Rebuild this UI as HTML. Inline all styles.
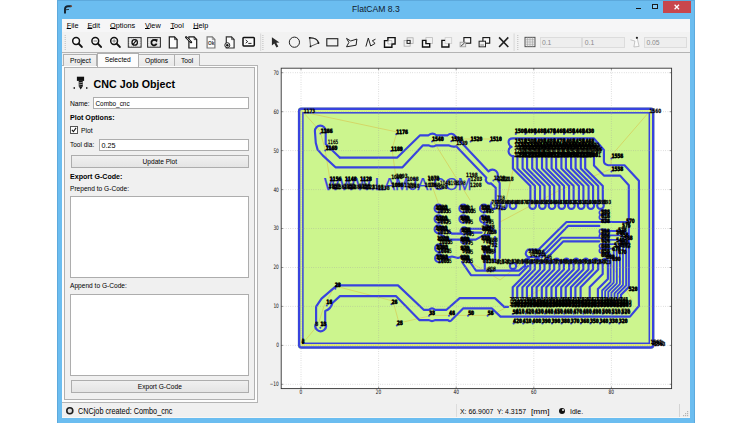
<!DOCTYPE html>
<html><head><meta charset="utf-8"><title>FlatCAM 8.3</title>
<style>
html,body{margin:0;padding:0;background:#fff;}
body{width:752px;height:423px;position:relative;overflow:hidden;font-family:"Liberation Sans",sans-serif;font-size:7.2px;color:#000;}
.a{position:absolute;}
.t{position:absolute;white-space:nowrap;line-height:10px;}
#win{left:57px;top:0;width:638px;height:423px;background:#6bbdf0;box-sizing:border-box;border-top:1px solid #5da9dc;border-left:0.6px solid #5da9dc;border-right:0.6px solid #5da9dc;}
#content{left:62px;top:19px;width:628px;height:399px;background:#f0f0f0;}
#menubar{left:62px;top:19px;width:628px;height:13px;background:#f6f6f7;}
#toolbar{left:62px;top:32px;width:628px;height:20px;background:#f2f2f2;border-bottom:1px solid #b4b4b4;}
.menu{top:20.7px;font-size:7.3px;line-height:10px;}
.menu u{text-decoration-thickness:0.6px;text-underline-offset:0.3px;}
.inp{background:#eeeeee;border:1px solid #dcdcdc;box-sizing:border-box;color:#8a8a8a;font-size:6.8px;line-height:9.9px;padding-left:1.4px;height:11.5px;top:36.5px;}
.tab{box-sizing:border-box;border:1px solid #b0b0b0;border-bottom:none;background:linear-gradient(#f3f3f3,#e8e8e8);text-align:center;font-size:6.7px;line-height:9px;color:#000;}
.field{background:#fff;border:1px solid #adadad;box-sizing:border-box;font-size:6.9px;}
.btn{background:linear-gradient(#f0f0f0,#e4e4e4);border:1px solid #adadad;box-sizing:border-box;text-align:center;font-size:6.6px;}
</style></head><body>
<div id="win" class="a"></div>
<div id="content" class="a"></div>
<div id="menubar" class="a"></div>
<div id="toolbar" class="a"></div>
<svg class="a" style="left:63px;top:4px" width="10" height="10" viewBox="0 0 10 10"><path d="M2 9.4 L2 5 Q2 2.2 5 2.2 L8.2 2.2" fill="none" stroke="#14222e" stroke-width="1.9"/><path d="M2.6 5.8 L6 5.4" fill="none" stroke="#2a3a48" stroke-width="1"/><circle cx="8.2" cy="2.2" r="0.9" fill="#7a4a38"/></svg>
<div class="t" style="left:352px;top:4px;font-size:8.6px;line-height:11px;color:#10202c;">FlatCAM 8.3</div>
<div class="a" style="left:636px;top:8.1px;width:5.4px;height:1.3px;background:#161616;"></div>
<div class="a" style="left:651.6px;top:4.2px;width:6.6px;height:5.2px;box-sizing:border-box;border:0.8px solid #1a1a1a;border-top-width:1.6px;background:#86caf4;"></div>
<div class="a" style="left:663px;top:1px;width:27.7px;height:11.8px;background:#c8474d;"></div>
<svg class="a" style="left:663px;top:1px" width="27.7" height="11.8"><path d="M11.6 3.8 L16 8.2 M16 3.8 L11.6 8.2" stroke="#fff" stroke-width="1.25"/></svg>
<div class="t menu" style="left:66.7px;"><u>F</u>ile</div>
<div class="t menu" style="left:87.4px;"><u>E</u>dit</div>
<div class="t menu" style="left:110.0px;"><u>O</u>ptions</div>
<div class="t menu" style="left:145.0px;"><u>V</u>iew</div>
<div class="t menu" style="left:170.4px;"><u>T</u>ool</div>
<div class="t menu" style="left:193.2px;"><u>H</u>elp</div>
<svg class="a" style="left:62.5px;top:32px" width="627.5" height="20" viewBox="62.5 32 627.5 20">
<line x1="64.7" y1="35" x2="64.7" y2="50" stroke="#bdbdbd" stroke-width="1" stroke-dasharray="1 1"/>
<line x1="262.4" y1="35" x2="262.4" y2="50" stroke="#bdbdbd" stroke-width="1" stroke-dasharray="1 1"/>
<line x1="517.3" y1="35" x2="517.3" y2="50" stroke="#bdbdbd" stroke-width="1" stroke-dasharray="1 1"/>
<line x1="260.2" y1="33.5" x2="260.2" y2="51" stroke="#d0d0d0" stroke-width="0.8"/>
<line x1="513.6" y1="33.5" x2="513.6" y2="51" stroke="#d0d0d0" stroke-width="0.8"/>
<circle cx="75.6" cy="41" r="3.4" fill="#fafafa" stroke="#111" stroke-width="1.5"/><line x1="78.19999999999999" y1="43.6" x2="81.3" y2="46.9" stroke="#111" stroke-width="2" stroke-linecap="round"/>
<circle cx="94.8" cy="41" r="3.4" fill="#fafafa" stroke="#111" stroke-width="1.5"/><line x1="97.39999999999999" y1="43.6" x2="100.5" y2="46.9" stroke="#111" stroke-width="2" stroke-linecap="round"/><line x1="93.0" y1="41" x2="96.6" y2="41" stroke="#666" stroke-width="0.8"/>
<circle cx="113.6" cy="41" r="3.4" fill="#fafafa" stroke="#111" stroke-width="1.5"/><line x1="116.19999999999999" y1="43.6" x2="119.3" y2="46.9" stroke="#111" stroke-width="2" stroke-linecap="round"/><line x1="111.8" y1="41" x2="115.39999999999999" y2="41" stroke="#666" stroke-width="0.8"/><line x1="113.6" y1="39.2" x2="113.6" y2="42.8" stroke="#666" stroke-width="0.8"/>
<rect x="127.8" y="37.6" width="12.8" height="9.6" fill="#d9d9d9" stroke="#2a2a2a" stroke-width="1"/><line x1="129.93" y1="38.1" x2="129.93" y2="46.7" stroke="#f4f4f4" stroke-width="0.6"/><line x1="132.06" y1="38.1" x2="132.06" y2="46.7" stroke="#f4f4f4" stroke-width="0.6"/><line x1="134.19" y1="38.1" x2="134.19" y2="46.7" stroke="#f4f4f4" stroke-width="0.6"/><line x1="136.32" y1="38.1" x2="136.32" y2="46.7" stroke="#f4f4f4" stroke-width="0.6"/><line x1="138.45" y1="38.1" x2="138.45" y2="46.7" stroke="#f4f4f4" stroke-width="0.6"/><line x1="128.3" y1="40.00" x2="140.1" y2="40.00" stroke="#f4f4f4" stroke-width="0.6"/><line x1="128.3" y1="42.40" x2="140.1" y2="42.40" stroke="#f4f4f4" stroke-width="0.6"/><line x1="128.3" y1="44.80" x2="140.1" y2="44.80" stroke="#f4f4f4" stroke-width="0.6"/><circle cx="134.2" cy="42.4" r="2.7" fill="#f6f6f6" stroke="#111" stroke-width="1.3"/><line x1="132.4" y1="44.6" x2="136" y2="40.2" stroke="#111" stroke-width="1.1"/>
<rect x="147.1" y="37.6" width="12.8" height="9.6" fill="#d9d9d9" stroke="#2a2a2a" stroke-width="1"/><line x1="149.23" y1="38.1" x2="149.23" y2="46.7" stroke="#f4f4f4" stroke-width="0.6"/><line x1="151.36" y1="38.1" x2="151.36" y2="46.7" stroke="#f4f4f4" stroke-width="0.6"/><line x1="153.49" y1="38.1" x2="153.49" y2="46.7" stroke="#f4f4f4" stroke-width="0.6"/><line x1="155.62" y1="38.1" x2="155.62" y2="46.7" stroke="#f4f4f4" stroke-width="0.6"/><line x1="157.75" y1="38.1" x2="157.75" y2="46.7" stroke="#f4f4f4" stroke-width="0.6"/><line x1="147.6" y1="40.00" x2="159.4" y2="40.00" stroke="#f4f4f4" stroke-width="0.6"/><line x1="147.6" y1="42.40" x2="159.4" y2="42.40" stroke="#f4f4f4" stroke-width="0.6"/><line x1="147.6" y1="44.80" x2="159.4" y2="44.80" stroke="#f4f4f4" stroke-width="0.6"/><path d="M155.6 40.8 A2.7 2.7 0 1 0 156.1 43.6" fill="none" stroke="#111" stroke-width="1.7"/><path d="M153.6 39 L157.2 39.2 L156.4 42.6 Z" fill="#111"/>
<path d="M168.8 36.9 L174.00000000000003 36.9 L176.60000000000002 39.6 L176.60000000000002 48 L168.8 48 Z" fill="#fbfbfb" stroke="#1a1a1a" stroke-width="1.2"/><path d="M174.00000000000003 36.9 L174.00000000000003 39.6 L176.60000000000002 39.6" fill="none" stroke="#1a1a1a" stroke-width="0.7"/>
<path d="M188.4 36.9 L193.60000000000002 36.9 L196.20000000000002 39.6 L196.20000000000002 48 L188.4 48 Z" fill="#fbfbfb" stroke="#1a1a1a" stroke-width="1.2"/><path d="M193.60000000000002 36.9 L193.60000000000002 39.6 L196.20000000000002 39.6" fill="none" stroke="#1a1a1a" stroke-width="0.7"/><path d="M185.6 37.2 L190.6 42.2" stroke="#111" stroke-width="2.2" stroke-linecap="round"/><path d="M186.2 37.8 L190 41.6" stroke="#f4f4f4" stroke-width="0.8"/>
<path d="M206.6 36.9 L211.8 36.9 L214.4 39.6 L214.4 48 L206.6 48 Z" fill="#fbfbfb" stroke="#777" stroke-width="1.2"/><path d="M211.8 36.9 L211.8 39.6 L214.4 39.6" fill="none" stroke="#777" stroke-width="0.7"/><text x="207.5" y="45.4" font-size="4.8" font-weight="bold" fill="#3a3a3a" font-family="Liberation Sans, sans-serif">Ok</text>
<path d="M225.8 36.9 L231.00000000000003 36.9 L233.60000000000002 39.6 L233.60000000000002 48 L225.8 48 Z" fill="#fbfbfb" stroke="#333" stroke-width="1.2"/><path d="M231.00000000000003 36.9 L231.00000000000003 39.6 L233.60000000000002 39.6" fill="none" stroke="#333" stroke-width="0.7"/><circle cx="226.8" cy="45.2" r="2.5" fill="#f4f4f4" stroke="#222" stroke-width="1"/><circle cx="226.8" cy="45.2" r="1.2" fill="#111"/>
<rect x="242.5" y="37.5" width="11.3" height="8.4" rx="0.8" fill="#fafafa" stroke="#111" stroke-width="1.5"/><path d="M245.2 40 L247.2 41.6 L245.2 43.2" fill="none" stroke="#111" stroke-width="0.9"/><line x1="247.8" y1="43.4" x2="251" y2="43.4" stroke="#111" stroke-width="0.9"/>
<path d="M271.4 37.2 L271.4 45.6 L273.8 43.6 L276 47.4 L277.8 46.4 L275.8 42.8 L279 42.4 Z" fill="#2a2a2a"/>
<circle cx="293.9" cy="42.2" r="5.1" fill="none" stroke="#222" stroke-width="1"/>
<path d="M309.2 37.8 Q317.2 38 318 43 L310 46.4 Z" fill="none" stroke="#333" stroke-width="0.8"/><path d="M309.2 37.8 Q317.2 38 318 43" fill="none" stroke="#222" stroke-width="1.1"/><circle cx="309.2" cy="37.8" r="0.9" fill="#111"/><circle cx="318" cy="43" r="0.9" fill="#111"/><circle cx="310" cy="46.4" r="0.9" fill="#111"/>
<rect x="326.3" y="38.7" width="11" height="7.2" fill="none" stroke="#222" stroke-width="1.1"/>
<path d="M346 38.4 L350.2 41 L356.4 39 L355.6 45.2 L346 46.8 L348.4 42.4 Z" fill="none" stroke="#222" stroke-width="1"/>
<path d="M365.4 46.6 L367.8 38 L370.2 46 L374.6 43.4 L371.8 40.8 L375 39.2" fill="none" stroke="#222" stroke-width="1"/>
<path d="M387.4 37.6 L394.6 37.6 L394.6 44 L391.4 44 L391.4 47.2 L384 47.2 L384 40.6 L387.4 40.6 Z" fill="#fafafa" stroke="#111" stroke-width="1.4"/><path d="M387.4 40.6 L391.4 40.6 L391.4 44 L387.4 44 Z" fill="none" stroke="#999" stroke-width="0.6"/>
<rect x="406.6" y="37.8" width="6" height="5.6" fill="none" stroke="#aaa" stroke-width="0.8"/><rect x="403.6" y="40.4" width="6" height="5.8" fill="none" stroke="#aaa" stroke-width="0.8"/><rect x="406.6" y="40.4" width="3" height="3" fill="#f8f8f8" stroke="#222" stroke-width="1"/>
<rect x="425.4" y="37.6" width="6.6" height="6" fill="none" stroke="#bbb" stroke-width="0.8"/><path d="M422 40.4 L425.4 40.4 L425.4 43.6 L429.2 43.6 L429.2 47 L422 47 Z" fill="#fafafa" stroke="#111" stroke-width="1.4"/>
<rect x="444.6" y="37.6" width="6.6" height="6" fill="none" stroke="#ccc" stroke-width="0.8"/><path d="M444.6 40.4 L441.4 40.4 L441.4 47 L448.4 47 L448.4 43.6" fill="none" stroke="#111" stroke-width="1.4"/>
<rect x="463.4" y="37.6" width="6.8" height="5.6" fill="#fafafa" stroke="#111" stroke-width="1.1"/><rect x="459.6" y="42.2" width="5.6" height="4.6" fill="#e8e8e8" stroke="#999" stroke-width="0.8"/><path d="M460.4 46.2 L464.2 42.8" stroke="#222" stroke-width="0.8"/>
<rect x="482.4" y="37.6" width="6.8" height="5.6" fill="#fafafa" stroke="#111" stroke-width="1.1"/><rect x="478.6" y="41.2" width="6.4" height="5.6" fill="#f0f0f0" stroke="#222" stroke-width="1"/><rect x="479.8" y="44" width="3.6" height="2.2" fill="#bbb"/>
<path d="M498.6 37.4 L507.8 47 M507.8 37.4 L498.6 47" stroke="#222" stroke-width="1.6"/>
<rect x="524.5" y="37.3" width="10" height="9.4" fill="#e8e8e8" stroke="#444" stroke-width="0.9"/><line x1="527.0" y1="37.3" x2="527.0" y2="46.7" stroke="#999" stroke-width="0.5"/><line x1="524.5" y1="39.65" x2="534.5" y2="39.65" stroke="#999" stroke-width="0.5"/><line x1="529.5" y1="37.3" x2="529.5" y2="46.7" stroke="#999" stroke-width="0.5"/><line x1="524.5" y1="42.0" x2="534.5" y2="42.0" stroke="#999" stroke-width="0.5"/><line x1="532.0" y1="37.3" x2="532.0" y2="46.7" stroke="#999" stroke-width="0.5"/><line x1="524.5" y1="44.349999999999994" x2="534.5" y2="44.349999999999994" stroke="#999" stroke-width="0.5"/>
<path d="M630 39.8 L634.4 41 L633.4 47 L638.6 46.4 L636.8 38.6" fill="#fafafa" stroke="#b0b0b0" stroke-width="0.7"/><circle cx="636.4" cy="37.8" r="1.1" fill="#222"/>
</svg>
<div class="a inp" style="left:539.5px;width:42.8px;">0.1</div>
<div class="a inp" style="left:582.4px;width:42.4px;">0.1</div>
<div class="a inp" style="left:644px;width:42.6px;">0.05</div>
<div class="a" style="left:62px;top:65.4px;width:196px;height:337.7px;box-sizing:border-box;border:1px solid #b4b4b4;border-left:none;background:#fdfdfd;"></div>
<div class="a" style="left:64.4px;top:67.4px;width:190.4px;height:332.8px;box-sizing:border-box;border:1px solid #b0b0b0;background:#f0f0f0;"></div>
<div class="a tab" style="left:63.4px;top:54px;width:34px;height:11.6px;padding-top:1.1px;">Project</div>
<div class="a tab" style="left:138.2px;top:54px;width:36.8px;height:11.6px;padding-top:1.1px;">Options</div>
<div class="a tab" style="left:174px;top:54px;width:26.2px;height:11.6px;padding-top:1.1px;">Tool</div>
<div class="a tab" style="left:96.6px;top:53px;width:42.2px;height:13.6px;padding-top:1.4px;background:#fdfdfd;">Selected</div>
<svg class="a" style="left:72px;top:76px" width="17" height="15" viewBox="0 0 17 15"><rect x="4.9" y="0.7" width="7.2" height="4.2" fill="#111"/><rect x="6.7" y="4.9" width="4.1" height="5.4" fill="#111"/><path d="M6.7 10.3 L10.8 10.3 L8.7 13.6 Z" fill="#111"/><path d="M6.7 7 L10.8 6.2 M6.7 9 L10.8 8.2" stroke="#eee" stroke-width="0.6"/><path d="M0.7 12 L3 10.9 L3 13.1 Z M16.3 12 L14 10.9 L14 13.1 Z" fill="#111"/></svg>
<div class="t" style="left:93.6px;top:76.6px;font-size:10.7px;line-height:14px;font-weight:bold;">CNC Job Object</div>
<div class="t" style="left:70px;top:99px;font-size:6.7px;">Name:</div>
<div class="a field" style="left:92.9px;top:97.4px;width:156.1px;height:11.6px;line-height:12.2px;padding-left:1.6px;font-size:6.4px;overflow:hidden;">Combo_cnc</div>
<div class="t" style="left:70px;top:113.1px;font-size:7.1px;font-weight:bold;">Plot Options:</div>
<div class="a" style="left:70.3px;top:126.3px;width:8px;height:8px;box-sizing:border-box;border:1px solid #555;background:#fff;"></div>
<svg class="a" style="left:70.3px;top:126.3px" width="8" height="8"><path d="M1.9 3.9 L3.4 5.7 L6.1 1.9" fill="none" stroke="#111" stroke-width="1.1"/></svg>
<div class="t" style="left:81px;top:125.6px;font-size:6.7px;">Plot</div>
<div class="t" style="left:70px;top:140.2px;font-size:6.5px;">Tool dia:</div>
<div class="a field" style="left:99px;top:139.4px;width:150px;height:11.4px;line-height:11.8px;padding-left:1.6px;font-size:7.2px;overflow:hidden;">0.25</div>
<div class="a btn" style="left:70.8px;top:155.3px;width:178.1px;height:12.7px;line-height:12.8px;">Update Plot</div>
<div class="t" style="left:70px;top:172px;font-size:7.1px;font-weight:bold;">Export G-Code:</div>
<div class="t" style="left:70px;top:183.6px;font-size:6.6px;">Prepend to G-Code:</div>
<div class="a field" style="left:70px;top:196.4px;width:179px;height:81.4px;"></div>
<div class="t" style="left:70px;top:281.1px;font-size:6.6px;">Append to G-Code:</div>
<div class="a field" style="left:70px;top:293.5px;width:179px;height:82.4px;"></div>
<div class="a btn" style="left:70.8px;top:380.2px;width:178.1px;height:12.4px;line-height:11.6px;">Export G-Code</div>
<svg class="a" style="left:259px;top:53px" width="431" height="350" viewBox="259 53 431 350" font-family="'DejaVu Sans', sans-serif">
<rect x="281.2" y="68.2" width="390.40000000000003" height="320.40000000000003" fill="#fff"/>
<g font-size="5.4" fill="#111" transform="scale(0.8 1.12)">
<text x="376.2" y="352.1" text-anchor="middle">0</text>
<text x="473.2" y="352.1" text-anchor="middle">20</text>
<text x="570.2" y="352.1" text-anchor="middle">40</text>
<text x="667.2" y="352.1" text-anchor="middle">60</text>
<text x="764.2" y="352.1" text-anchor="middle">80</text>
<text x="348.6" y="345.0" text-anchor="end">−10</text>
<text x="348.6" y="310.2" text-anchor="end">0</text>
<text x="348.6" y="275.4" text-anchor="end">10</text>
<text x="348.6" y="240.6" text-anchor="end">20</text>
<text x="348.6" y="205.8" text-anchor="end">30</text>
<text x="348.6" y="171.1" text-anchor="end">40</text>
<text x="348.6" y="136.3" text-anchor="end">50</text>
<text x="348.6" y="101.5" text-anchor="end">60</text>
<text x="348.6" y="66.7" text-anchor="end">70</text>
</g>
<line x1="301.0" y1="388.6" x2="301.0" y2="386.6" stroke="#333" stroke-width="0.5"/><line x1="301.0" y1="68.2" x2="301.0" y2="70.2" stroke="#333" stroke-width="0.5"/>
<line x1="378.6" y1="388.6" x2="378.6" y2="386.6" stroke="#333" stroke-width="0.5"/><line x1="378.6" y1="68.2" x2="378.6" y2="70.2" stroke="#333" stroke-width="0.5"/>
<line x1="456.2" y1="388.6" x2="456.2" y2="386.6" stroke="#333" stroke-width="0.5"/><line x1="456.2" y1="68.2" x2="456.2" y2="70.2" stroke="#333" stroke-width="0.5"/>
<line x1="533.8" y1="388.6" x2="533.8" y2="386.6" stroke="#333" stroke-width="0.5"/><line x1="533.8" y1="68.2" x2="533.8" y2="70.2" stroke="#333" stroke-width="0.5"/>
<line x1="611.4" y1="388.6" x2="611.4" y2="386.6" stroke="#333" stroke-width="0.5"/><line x1="611.4" y1="68.2" x2="611.4" y2="70.2" stroke="#333" stroke-width="0.5"/>
<line x1="281.2" y1="384.3" x2="283.2" y2="384.3" stroke="#333" stroke-width="0.5"/><line x1="671.6" y1="384.3" x2="669.6" y2="384.3" stroke="#333" stroke-width="0.5"/>
<line x1="281.2" y1="345.4" x2="283.2" y2="345.4" stroke="#333" stroke-width="0.5"/><line x1="671.6" y1="345.4" x2="669.6" y2="345.4" stroke="#333" stroke-width="0.5"/>
<line x1="281.2" y1="306.4" x2="283.2" y2="306.4" stroke="#333" stroke-width="0.5"/><line x1="671.6" y1="306.4" x2="669.6" y2="306.4" stroke="#333" stroke-width="0.5"/>
<line x1="281.2" y1="267.5" x2="283.2" y2="267.5" stroke="#333" stroke-width="0.5"/><line x1="671.6" y1="267.5" x2="669.6" y2="267.5" stroke="#333" stroke-width="0.5"/>
<line x1="281.2" y1="228.5" x2="283.2" y2="228.5" stroke="#333" stroke-width="0.5"/><line x1="671.6" y1="228.5" x2="669.6" y2="228.5" stroke="#333" stroke-width="0.5"/>
<line x1="281.2" y1="189.6" x2="283.2" y2="189.6" stroke="#333" stroke-width="0.5"/><line x1="671.6" y1="189.6" x2="669.6" y2="189.6" stroke="#333" stroke-width="0.5"/>
<line x1="281.2" y1="150.6" x2="283.2" y2="150.6" stroke="#333" stroke-width="0.5"/><line x1="671.6" y1="150.6" x2="669.6" y2="150.6" stroke="#333" stroke-width="0.5"/>
<line x1="281.2" y1="111.7" x2="283.2" y2="111.7" stroke="#333" stroke-width="0.5"/><line x1="671.6" y1="111.7" x2="669.6" y2="111.7" stroke="#333" stroke-width="0.5"/>
<line x1="281.2" y1="72.7" x2="283.2" y2="72.7" stroke="#333" stroke-width="0.5"/><line x1="671.6" y1="72.7" x2="669.6" y2="72.7" stroke="#333" stroke-width="0.5"/>
<rect x="297.9" y="107.6" width="356.5" height="241.1" rx="2.6" fill="#ccf58e"/>
<path d="M303.0,112.0 L320.0,131.0 L325.0,149.0" fill="none" stroke="#d9c24e" stroke-width="0.6" stroke-linejoin="round" stroke-linecap="round" />
<path d="M303.0,112.0 L397.0,132.0 L392.0,149.0 L396.0,178.0" fill="none" stroke="#d9c24e" stroke-width="0.6" stroke-linejoin="round" stroke-linecap="round" />
<path d="M325.0,149.0 L330.0,180.0" fill="none" stroke="#d9c24e" stroke-width="0.6" stroke-linejoin="round" stroke-linecap="round" />
<path d="M432.0,139.0 L470.0,200.0" fill="none" stroke="#d9c24e" stroke-width="0.6" stroke-linejoin="round" stroke-linecap="round" />
<path d="M452.0,139.0 L490.0,139.0" fill="none" stroke="#d9c24e" stroke-width="0.6" stroke-linejoin="round" stroke-linecap="round" />
<path d="M611.0,156.0 L649.0,112.0" fill="none" stroke="#d9c24e" stroke-width="0.6" stroke-linejoin="round" stroke-linecap="round" />
<path d="M611.0,156.0 L611.0,169.0 L560.0,190.0 L500.0,222.0" fill="none" stroke="#d9c24e" stroke-width="0.6" stroke-linejoin="round" stroke-linecap="round" />
<path d="M303.0,343.0 L318.0,325.0 L324.0,306.0 L335.0,286.0 L393.0,301.0 L399.0,323.0 L432.0,315.4 L491.0,315.4 L540.0,290.0" fill="none" stroke="#d9c24e" stroke-width="0.6" stroke-linejoin="round" stroke-linecap="round" />
<path d="M513.0,170.0 L505.0,205.0" fill="none" stroke="#d9c24e" stroke-width="0.6" stroke-linejoin="round" stroke-linecap="round" />
<path d="M440.0,208.0 L430.0,180.0" fill="none" stroke="#d9c24e" stroke-width="0.6" stroke-linejoin="round" stroke-linecap="round" />
<path d="M536.0,252.0 L500.0,280.0 L470.0,262.0" fill="none" stroke="#d9c24e" stroke-width="0.6" stroke-linejoin="round" stroke-linecap="round" />
<path d="M610.0,262.0 L632.0,300.0" fill="none" stroke="#d9c24e" stroke-width="0.6" stroke-linejoin="round" stroke-linecap="round" />
<rect x="301.1" y="111" width="350.2" height="234" fill="none" stroke="#d9f682" stroke-width="1.4"/>
<line x1="302" y1="345.1" x2="651" y2="345.1" stroke="#e6ee66" stroke-width="1.9"/>
<rect x="299.1" y="108.75" width="354.1" height="238.75" rx="2.4" fill="none" stroke="#3843de" stroke-width="2.4"/>
<rect x="302.9" y="112.8" width="346.4" height="230.5" fill="none" stroke="#3843de" stroke-width="1.5"/>
<text x="324.1" y="189.7" font-family="'Liberation Sans', sans-serif" font-size="17" textLength="147.6" lengthAdjust="spacingAndGlyphs" fill="#3843de" stroke="#3843de" stroke-width="0.25">WWW.LAMJA.COM</text>
<path d="M339.7,157.6 L325.7,144.0 L325.7,131.0 A5.4,5.4 0 0 0 314.9,131 L315.8,143.0 L317.6,149.6 L322.7,155.4 L335.5,167.3 L402.5,167.3 L423.0,145.3 L428.9,145.3 Q432.5,147.6 436,145.3 L448.5,145.3 Q452.8,147.4 456.2,146.2 L486.3,177.7 A4,4 0 0 0 491,183.4 L495.7,187.8 L495.7,201.0" fill="none" stroke="#3843de" stroke-width="2.15" stroke-linejoin="round" stroke-linecap="round" />
<path d="M339.7,157.6 L397.3,157.6 L420.1,135.3 L428.5,135.3 Q432.5,131.8 436.4,135.3 L447.6,135.3 Q451.6,131.8 455.5,136.3 L488.6,171.4 A4.1,4.1 0 0 1 496.5,178.4 L499.7,183.0 L499.7,201.0" fill="none" stroke="#3843de" stroke-width="2.15" stroke-linejoin="round" stroke-linecap="round" />
<path d="M316.1,323.2 L316.1,306.7 L321.5,298.6 L336.9,285.4 L398.0,285.4 L423.7,309.8 L429.0,309.8 Q432,307 435,309.8 L446.5,309.8 L459.7,298.1 L494.9,298.1 L504.2,306.9 L508.0,306.9" fill="none" stroke="#3843de" stroke-width="2.15" stroke-linejoin="round" stroke-linecap="round" />
<path d="M316.1,323.2 A5.3,5.3 0 1 0 325.2,323.2 L325.2,311.0 Q331,309 332.4,303 L339.9,296.1 L395.9,296.1 L419.3,320.1 L429.0,320.1 Q432,322 435,320.1 L448.0,320.1 Q450,322 451.6,320.1 L463.3,308.3 L491.7,308.3 L500.5,316.6 L630.0,316.6 L638.9,306.0 L638.9,180.8 L624.5,165.2 L608.2,165.2 Q603.9,164.5 603.9,161 L603.9,149.9 L593.7,138.3 L513.0,138.3 Q508.3,138.3 508.6,142.5 Q509,146 511.5,146.8 Q508.3,148 508.6,151.8 Q509,155.6 513.9,156.4" fill="none" stroke="#3843de" stroke-width="2.15" stroke-linejoin="round" stroke-linecap="round" />
<path d="M594.0,156.0 L594.0,165.6 L603.9,175.6 L620.1,175.6 L628.8,185.2 L628.8,287.0 L621.0,294.8 L621.0,298.0" fill="none" stroke="#3843de" stroke-width="2.15" stroke-linejoin="round" stroke-linecap="round" />
<path d="M512.9,156.0 L512.9,168.4 L530.4,185.9 L530.4,203.2" fill="none" stroke="#3843de" stroke-width="2.15" stroke-linejoin="round" stroke-linecap="round" />
<path d="M517.4,156.0 L517.4,168.4 L534.9,185.9 L534.9,203.2" fill="none" stroke="#3843de" stroke-width="2.15" stroke-linejoin="round" stroke-linecap="round" />
<path d="M530.4,203.2 A3.3,3.3 0 1 0 534.9,203.2" fill="none" stroke="#3843de" stroke-width="2.15" stroke-linejoin="round" stroke-linecap="round" />
<path d="M522.6,156.0 L522.6,168.4 L540.1,185.9 L540.1,203.2" fill="none" stroke="#3843de" stroke-width="2.15" stroke-linejoin="round" stroke-linecap="round" />
<path d="M527.1,156.0 L527.1,168.4 L544.6,185.9 L544.6,203.2" fill="none" stroke="#3843de" stroke-width="2.15" stroke-linejoin="round" stroke-linecap="round" />
<path d="M540.1,203.2 A3.3,3.3 0 1 0 544.6,203.2" fill="none" stroke="#3843de" stroke-width="2.15" stroke-linejoin="round" stroke-linecap="round" />
<path d="M532.2,156.0 L532.2,168.4 L549.8,185.9 L549.8,203.2" fill="none" stroke="#3843de" stroke-width="2.15" stroke-linejoin="round" stroke-linecap="round" />
<path d="M536.8,156.0 L536.8,168.4 L554.2,185.9 L554.2,203.2" fill="none" stroke="#3843de" stroke-width="2.15" stroke-linejoin="round" stroke-linecap="round" />
<path d="M549.8,203.2 A3.3,3.3 0 1 0 554.2,203.2" fill="none" stroke="#3843de" stroke-width="2.15" stroke-linejoin="round" stroke-linecap="round" />
<path d="M542.0,156.0 L542.0,168.4 L559.5,185.9 L559.5,203.2" fill="none" stroke="#3843de" stroke-width="2.15" stroke-linejoin="round" stroke-linecap="round" />
<path d="M546.5,156.0 L546.5,168.4 L564.0,185.9 L564.0,203.2" fill="none" stroke="#3843de" stroke-width="2.15" stroke-linejoin="round" stroke-linecap="round" />
<path d="M559.5,203.2 A3.3,3.3 0 1 0 564.0,203.2" fill="none" stroke="#3843de" stroke-width="2.15" stroke-linejoin="round" stroke-linecap="round" />
<path d="M551.6,156.0 L551.6,168.4 L569.1,185.9 L569.1,203.2" fill="none" stroke="#3843de" stroke-width="2.15" stroke-linejoin="round" stroke-linecap="round" />
<path d="M556.1,156.0 L556.1,168.4 L573.6,185.9 L573.6,203.2" fill="none" stroke="#3843de" stroke-width="2.15" stroke-linejoin="round" stroke-linecap="round" />
<path d="M569.1,203.2 A3.3,3.3 0 1 0 573.6,203.2" fill="none" stroke="#3843de" stroke-width="2.15" stroke-linejoin="round" stroke-linecap="round" />
<path d="M561.4,156.0 L561.4,168.4 L578.9,185.9 L578.9,203.2" fill="none" stroke="#3843de" stroke-width="2.15" stroke-linejoin="round" stroke-linecap="round" />
<path d="M565.9,156.0 L565.9,168.4 L583.4,185.9 L583.4,203.2" fill="none" stroke="#3843de" stroke-width="2.15" stroke-linejoin="round" stroke-linecap="round" />
<path d="M578.9,203.2 A3.3,3.3 0 1 0 583.4,203.2" fill="none" stroke="#3843de" stroke-width="2.15" stroke-linejoin="round" stroke-linecap="round" />
<path d="M571.1,156.0 L571.1,168.4 L588.6,185.9 L588.6,203.2" fill="none" stroke="#3843de" stroke-width="2.15" stroke-linejoin="round" stroke-linecap="round" />
<path d="M575.6,156.0 L575.6,168.4 L593.1,185.9 L593.1,203.2" fill="none" stroke="#3843de" stroke-width="2.15" stroke-linejoin="round" stroke-linecap="round" />
<path d="M588.6,203.2 A3.3,3.3 0 1 0 593.1,203.2" fill="none" stroke="#3843de" stroke-width="2.15" stroke-linejoin="round" stroke-linecap="round" />
<path d="M580.8,156.0 L580.8,168.4 L598.2,185.9 L598.2,203.2" fill="none" stroke="#3843de" stroke-width="2.15" stroke-linejoin="round" stroke-linecap="round" />
<path d="M585.2,156.0 L585.2,168.4 L602.8,185.9 L602.8,203.2" fill="none" stroke="#3843de" stroke-width="2.15" stroke-linejoin="round" stroke-linecap="round" />
<path d="M598.2,203.2 A3.3,3.3 0 1 0 602.8,203.2" fill="none" stroke="#3843de" stroke-width="2.15" stroke-linejoin="round" stroke-linecap="round" />
<path d="M491.6,202.4 L491.6,203.2 A3.3,3.3 0 1 0 496.1,203.2 L496.1,202.4" fill="none" stroke="#3843de" stroke-width="2.15" stroke-linejoin="round" stroke-linecap="round" />
<path d="M501.2,202.4 L501.2,203.2 A3.3,3.3 0 1 0 505.8,203.2 L505.8,202.4" fill="none" stroke="#3843de" stroke-width="2.15" stroke-linejoin="round" stroke-linecap="round" />
<path d="M510.8,202.4 L510.8,203.2 A3.3,3.3 0 1 0 515.2,203.2 L515.2,202.4" fill="none" stroke="#3843de" stroke-width="2.15" stroke-linejoin="round" stroke-linecap="round" />
<path d="M525.1,264.2 L525.1,267.0" fill="none" stroke="#3843de" stroke-width="2.15" stroke-linejoin="round" stroke-linecap="round" />
<path d="M530.3,264.2 L530.3,269.6 L512.7,287.2 L512.7,298.0" fill="none" stroke="#3843de" stroke-width="2.15" stroke-linejoin="round" stroke-linecap="round" />
<path d="M525.1,264.2 A3.3,3.3 0 1 1 530.3,264.2" fill="none" stroke="#3843de" stroke-width="2.15" stroke-linejoin="round" stroke-linecap="round" />
<path d="M534.8,264.2 L534.8,269.6 L517.2,287.2 L517.2,298.0" fill="none" stroke="#3843de" stroke-width="2.15" stroke-linejoin="round" stroke-linecap="round" />
<path d="M540.0,264.2 L540.0,269.6 L522.4,287.2 L522.4,298.0" fill="none" stroke="#3843de" stroke-width="2.15" stroke-linejoin="round" stroke-linecap="round" />
<path d="M534.8,264.2 A3.3,3.3 0 1 1 540.0,264.2" fill="none" stroke="#3843de" stroke-width="2.15" stroke-linejoin="round" stroke-linecap="round" />
<path d="M544.5,264.2 L544.5,269.6 L526.9,287.2 L526.9,298.0" fill="none" stroke="#3843de" stroke-width="2.15" stroke-linejoin="round" stroke-linecap="round" />
<path d="M549.7,264.2 L549.7,269.6 L532.1,287.2 L532.1,298.0" fill="none" stroke="#3843de" stroke-width="2.15" stroke-linejoin="round" stroke-linecap="round" />
<path d="M544.5,264.2 A3.3,3.3 0 1 1 549.7,264.2" fill="none" stroke="#3843de" stroke-width="2.15" stroke-linejoin="round" stroke-linecap="round" />
<path d="M554.2,264.2 L554.2,269.6 L536.6,287.2 L536.6,298.0" fill="none" stroke="#3843de" stroke-width="2.15" stroke-linejoin="round" stroke-linecap="round" />
<path d="M559.4,264.2 L559.4,269.6 L541.8,287.2 L541.8,298.0" fill="none" stroke="#3843de" stroke-width="2.15" stroke-linejoin="round" stroke-linecap="round" />
<path d="M554.2,264.2 A3.3,3.3 0 1 1 559.4,264.2" fill="none" stroke="#3843de" stroke-width="2.15" stroke-linejoin="round" stroke-linecap="round" />
<path d="M563.9,264.2 L563.9,269.6 L546.3,287.2 L546.3,298.0" fill="none" stroke="#3843de" stroke-width="2.15" stroke-linejoin="round" stroke-linecap="round" />
<path d="M569.1,264.2 L569.1,269.6 L551.5,287.2 L551.5,298.0" fill="none" stroke="#3843de" stroke-width="2.15" stroke-linejoin="round" stroke-linecap="round" />
<path d="M563.9,264.2 A3.3,3.3 0 1 1 569.1,264.2" fill="none" stroke="#3843de" stroke-width="2.15" stroke-linejoin="round" stroke-linecap="round" />
<path d="M573.6,264.2 L573.6,269.6 L556.0,287.2 L556.0,298.0" fill="none" stroke="#3843de" stroke-width="2.15" stroke-linejoin="round" stroke-linecap="round" />
<path d="M578.8,264.2 L578.8,269.6 L561.2,287.2 L561.2,298.0" fill="none" stroke="#3843de" stroke-width="2.15" stroke-linejoin="round" stroke-linecap="round" />
<path d="M573.6,264.2 A3.3,3.3 0 1 1 578.8,264.2" fill="none" stroke="#3843de" stroke-width="2.15" stroke-linejoin="round" stroke-linecap="round" />
<path d="M583.3,264.2 L583.3,269.6 L565.7,287.2 L565.7,298.0" fill="none" stroke="#3843de" stroke-width="2.15" stroke-linejoin="round" stroke-linecap="round" />
<path d="M588.5,264.2 L588.5,269.6 L570.9,287.2 L570.9,298.0" fill="none" stroke="#3843de" stroke-width="2.15" stroke-linejoin="round" stroke-linecap="round" />
<path d="M583.3,264.2 A3.3,3.3 0 1 1 588.5,264.2" fill="none" stroke="#3843de" stroke-width="2.15" stroke-linejoin="round" stroke-linecap="round" />
<path d="M593.0,264.2 L593.0,269.6 L575.4,287.2 L575.4,298.0" fill="none" stroke="#3843de" stroke-width="2.15" stroke-linejoin="round" stroke-linecap="round" />
<path d="M598.2,264.2 L598.2,269.6 L580.6,287.2 L580.6,298.0" fill="none" stroke="#3843de" stroke-width="2.15" stroke-linejoin="round" stroke-linecap="round" />
<path d="M593.0,264.2 A3.3,3.3 0 1 1 598.2,264.2" fill="none" stroke="#3843de" stroke-width="2.15" stroke-linejoin="round" stroke-linecap="round" />
<path d="M602.7,264.2 L602.7,274.0 L589.7,287.0 L589.7,298.0" fill="none" stroke="#3843de" stroke-width="2.15" stroke-linejoin="round" stroke-linecap="round" />
<path d="M607.9,264.2 L607.9,279.0 L597.9,289.0 L597.9,298.0" fill="none" stroke="#3843de" stroke-width="2.15" stroke-linejoin="round" stroke-linecap="round" />
<path d="M602.7,264.2 A3.3,3.3 0 1 1 607.9,264.2" fill="none" stroke="#3843de" stroke-width="2.15" stroke-linejoin="round" stroke-linecap="round" />
<path d="M603.5,253.0 L609.1,253.0 L610.6,254.5 L610.6,282.0 L602.1,290.5 L602.1,298.0" fill="none" stroke="#3843de" stroke-width="1.8" stroke-linejoin="round" stroke-linecap="round" />
<path d="M603.5,248.6 L612.2,248.6 L613.7,250.1 L613.7,282.7 L605.2,291.2 L605.2,298.0" fill="none" stroke="#3843de" stroke-width="1.8" stroke-linejoin="round" stroke-linecap="round" />
<path d="M603.5,244.2 L615.3,244.2 L616.8,245.7 L616.8,283.4 L608.3,291.9 L608.3,298.0" fill="none" stroke="#3843de" stroke-width="1.8" stroke-linejoin="round" stroke-linecap="round" />
<path d="M603.5,239.8 L618.4,239.8 L619.9,241.3 L619.9,284.1 L611.4,292.6 L611.4,298.0" fill="none" stroke="#3843de" stroke-width="1.8" stroke-linejoin="round" stroke-linecap="round" />
<path d="M603.5,235.4 L621.5,235.4 L623.0,236.9 L623.0,284.8 L614.5,293.3 L614.5,298.0" fill="none" stroke="#3843de" stroke-width="1.8" stroke-linejoin="round" stroke-linecap="round" />
<path d="M603.5,231.0 L624.6,231.0 L626.1,232.5 L626.1,285.5 L617.6,294.0 L617.6,298.0" fill="none" stroke="#3843de" stroke-width="1.8" stroke-linejoin="round" stroke-linecap="round" />
<path d="M538.5,257.0 L528.0,257.0 Q523.4,253.6 528,249.6 L538.7,249.6 L566.5,222.0 L599.3,222.0 L627.0,222.0" fill="none" stroke="#3843de" stroke-width="2.15" stroke-linejoin="round" stroke-linecap="round" />
<path d="M538.5,257.0 L543.1,251.6 L568.0,225.9 L599.3,225.9" fill="none" stroke="#3843de" stroke-width="2.15" stroke-linejoin="round" stroke-linecap="round" />
<path d="M541.5,257.6 L561.4,237.7 L599.3,237.7" fill="none" stroke="#3843de" stroke-width="2.15" stroke-linejoin="round" stroke-linecap="round" />
<path d="M546.6,258.4 L563.4,241.3 L599.3,241.3" fill="none" stroke="#3843de" stroke-width="2.15" stroke-linejoin="round" stroke-linecap="round" />
<path d="M606.0,210.3 L601.5,210.3 A2.2,2.2 0 0 0 601.5,214.7 L606.0,214.7" fill="none" stroke="#3843de" stroke-width="1.6" stroke-linejoin="round" stroke-linecap="round" />
<path d="M606.0,215.0 L601.5,215.0 A2.2,2.2 0 0 0 601.5,219.4 L606.0,219.4" fill="none" stroke="#3843de" stroke-width="1.6" stroke-linejoin="round" stroke-linecap="round" />
<path d="M606.0,229.3 L601.5,229.3 A2.2,2.2 0 0 0 601.5,233.7 L606.0,233.7" fill="none" stroke="#3843de" stroke-width="1.6" stroke-linejoin="round" stroke-linecap="round" />
<path d="M606.0,234.0 L601.5,234.0 A2.2,2.2 0 0 0 601.5,238.4 L606.0,238.4" fill="none" stroke="#3843de" stroke-width="1.6" stroke-linejoin="round" stroke-linecap="round" />
<path d="M606.0,243.8 L601.5,243.8 A2.2,2.2 0 0 0 601.5,248.2 L606.0,248.2" fill="none" stroke="#3843de" stroke-width="1.6" stroke-linejoin="round" stroke-linecap="round" />
<path d="M606.0,248.6 L601.5,248.6 A2.2,2.2 0 0 0 601.5,253.0 L606.0,253.0" fill="none" stroke="#3843de" stroke-width="1.6" stroke-linejoin="round" stroke-linecap="round" />
<circle cx="438.5" cy="208.5" r="3.9" fill="none" stroke="#3843de" stroke-width="2.15"/>
<circle cx="438.5" cy="219.1" r="3.9" fill="none" stroke="#3843de" stroke-width="2.15"/>
<circle cx="438.5" cy="229.2" r="3.9" fill="none" stroke="#3843de" stroke-width="2.15"/>
<circle cx="463.3" cy="208.5" r="3.9" fill="none" stroke="#3843de" stroke-width="2.15"/>
<circle cx="463.3" cy="219.1" r="3.9" fill="none" stroke="#3843de" stroke-width="2.15"/>
<circle cx="483.9" cy="208.5" r="3.9" fill="none" stroke="#3843de" stroke-width="2.15"/>
<circle cx="483.9" cy="219.1" r="3.9" fill="none" stroke="#3843de" stroke-width="2.15"/>
<circle cx="439.0" cy="248.2" r="3.9" fill="none" stroke="#3843de" stroke-width="2.15"/>
<circle cx="439.0" cy="258.3" r="3.9" fill="none" stroke="#3843de" stroke-width="2.15"/>
<path d="M442.3,226.6 L451.9,233.6 L461.5,233.6" fill="none" stroke="#3843de" stroke-width="2.15" stroke-linejoin="round" stroke-linecap="round" />
<path d="M437.0,232.8 L449.8,239.6 L475.7,239.6 L483.8,235.1 L489.5,235.1" fill="none" stroke="#3843de" stroke-width="2.15" stroke-linejoin="round" stroke-linecap="round" />
<path d="M467.6,228.7 L490.2,228.7" fill="none" stroke="#3843de" stroke-width="2.15" stroke-linejoin="round" stroke-linecap="round" />
<path d="M467.6,232.6 L481.7,232.6" fill="none" stroke="#3843de" stroke-width="2.15" stroke-linejoin="round" stroke-linecap="round" />
<circle cx="464.2" cy="231.0" r="3.6" fill="none" stroke="#3843de" stroke-width="2.15"/>
<circle cx="464.2" cy="240.6" r="3.2" fill="none" stroke="#3843de" stroke-width="2.15"/>
<path d="M443.0,258.5 L452.0,256.5 L458.0,258.0 L464.0,256.0 L470.0,262.0 L476.0,270.6 L518.9,270.6 L524.0,266.4" fill="none" stroke="#3843de" stroke-width="2.15" stroke-linejoin="round" stroke-linecap="round" />
<path d="M462.0,262.0 L471.0,275.2 L519.0,275.2 L528.0,266.0" fill="none" stroke="#3843de" stroke-width="2.15" stroke-linejoin="round" stroke-linecap="round" />
<circle cx="513.0" cy="266.0" r="3.2" fill="none" stroke="#3843de" stroke-width="2.15"/>
<path d="M499.7,208.0 L499.7,258.0" fill="none" stroke="#3843de" stroke-width="2.15" stroke-linejoin="round" stroke-linecap="round" />
<path d="M495.0,237.0 L495.0,262.0" fill="none" stroke="#3843de" stroke-width="2.15" stroke-linejoin="round" stroke-linecap="round" />
<path d="M484.8,246.0 L484.8,269.0" fill="none" stroke="#3843de" stroke-width="2.15" stroke-linejoin="round" stroke-linecap="round" />
<path d="M484.0,224.0 L492.0,228.0 L495.7,232.0" fill="none" stroke="#3843de" stroke-width="2.15" stroke-linejoin="round" stroke-linecap="round" />
<line x1="301.0" y1="68.2" x2="301.0" y2="388.6" stroke="#a0a0a0" stroke-width="0.5" stroke-dasharray="0.7 1.6"/>
<line x1="378.6" y1="68.2" x2="378.6" y2="388.6" stroke="#a0a0a0" stroke-width="0.5" stroke-dasharray="0.7 1.6"/>
<line x1="456.2" y1="68.2" x2="456.2" y2="388.6" stroke="#a0a0a0" stroke-width="0.5" stroke-dasharray="0.7 1.6"/>
<line x1="533.8" y1="68.2" x2="533.8" y2="388.6" stroke="#a0a0a0" stroke-width="0.5" stroke-dasharray="0.7 1.6"/>
<line x1="611.4" y1="68.2" x2="611.4" y2="388.6" stroke="#a0a0a0" stroke-width="0.5" stroke-dasharray="0.7 1.6"/>
<line x1="281.2" y1="384.3" x2="671.6" y2="384.3" stroke="#a0a0a0" stroke-width="0.5" stroke-dasharray="0.7 1.6"/>
<line x1="281.2" y1="345.4" x2="671.6" y2="345.4" stroke="#a0a0a0" stroke-width="0.5" stroke-dasharray="0.7 1.6"/>
<line x1="281.2" y1="306.4" x2="671.6" y2="306.4" stroke="#a0a0a0" stroke-width="0.5" stroke-dasharray="0.7 1.6"/>
<line x1="281.2" y1="267.5" x2="671.6" y2="267.5" stroke="#a0a0a0" stroke-width="0.5" stroke-dasharray="0.7 1.6"/>
<line x1="281.2" y1="228.5" x2="671.6" y2="228.5" stroke="#a0a0a0" stroke-width="0.5" stroke-dasharray="0.7 1.6"/>
<line x1="281.2" y1="189.6" x2="671.6" y2="189.6" stroke="#a0a0a0" stroke-width="0.5" stroke-dasharray="0.7 1.6"/>
<line x1="281.2" y1="150.6" x2="671.6" y2="150.6" stroke="#a0a0a0" stroke-width="0.5" stroke-dasharray="0.7 1.6"/>
<line x1="281.2" y1="111.7" x2="671.6" y2="111.7" stroke="#a0a0a0" stroke-width="0.5" stroke-dasharray="0.7 1.6"/>
<line x1="281.2" y1="72.7" x2="671.6" y2="72.7" stroke="#a0a0a0" stroke-width="0.5" stroke-dasharray="0.7 1.6"/>
<g fill="#3843de"><circle cx="320.4" cy="133.4" r="1.0"/><circle cx="325.2" cy="150.6" r="1.0"/><circle cx="396.2" cy="134.2" r="1.0"/><circle cx="391.0" cy="151.0" r="1.0"/><circle cx="432.0" cy="141.4" r="1.0"/><circle cx="451.2" cy="141.2" r="1.0"/><circle cx="470.6" cy="141.4" r="1.0"/><circle cx="490.0" cy="141.4" r="1.0"/><circle cx="611.4" cy="158.4" r="1.0"/><circle cx="611.4" cy="171.4" r="1.0"/><circle cx="493.4" cy="180.6" r="1.0"/><circle cx="335.4" cy="288.8" r="1.0"/><circle cx="326.8" cy="305.6" r="1.0"/><circle cx="320.4" cy="327.8" r="1.0"/><circle cx="391.4" cy="304.2" r="1.0"/><circle cx="396.8" cy="325.6" r="1.0"/><circle cx="429.0" cy="315.8" r="1.0"/><circle cx="449.0" cy="315.8" r="1.0"/><circle cx="468.0" cy="315.8" r="1.0"/><circle cx="487.6" cy="315.8" r="1.0"/><circle cx="512.6" cy="314.0" r="1.0"/><circle cx="515.8" cy="134.0" r="1.1"/><circle cx="525.4" cy="134.0" r="1.1"/><circle cx="535.1" cy="134.0" r="1.1"/><circle cx="544.7" cy="134.0" r="1.1"/><circle cx="554.4" cy="134.0" r="1.1"/><circle cx="564.0" cy="134.0" r="1.1"/><circle cx="573.6" cy="134.0" r="1.1"/><circle cx="583.3" cy="134.0" r="1.1"/><circle cx="516.2" cy="313.6" r="1.1"/><circle cx="513.6" cy="323.4" r="1.1"/><circle cx="525.8" cy="313.6" r="1.1"/><circle cx="523.2" cy="323.4" r="1.1"/><circle cx="535.4" cy="313.6" r="1.1"/><circle cx="532.8" cy="323.4" r="1.1"/><circle cx="545.0" cy="313.6" r="1.1"/><circle cx="542.4" cy="323.4" r="1.1"/><circle cx="554.6" cy="313.6" r="1.1"/><circle cx="552.0" cy="323.4" r="1.1"/><circle cx="564.2" cy="313.6" r="1.1"/><circle cx="561.6" cy="323.4" r="1.1"/><circle cx="573.8" cy="313.6" r="1.1"/><circle cx="571.2" cy="323.4" r="1.1"/><circle cx="583.4" cy="313.6" r="1.1"/><circle cx="580.8" cy="323.4" r="1.1"/><circle cx="593.0" cy="313.6" r="1.1"/><circle cx="590.4" cy="323.4" r="1.1"/><circle cx="602.6" cy="313.6" r="1.1"/><circle cx="600.0" cy="323.4" r="1.1"/><circle cx="612.2" cy="313.6" r="1.1"/><circle cx="609.6" cy="323.4" r="1.1"/><circle cx="621.8" cy="313.6" r="1.1"/><circle cx="619.2" cy="323.4" r="1.1"/></g>
<g fill="#000" font-family="'DejaVu Sans Condensed', 'DejaVu Sans', sans-serif" font-size="5" font-weight="bold" stroke="#000" stroke-width="0.22" transform="scale(0.93 1.18)"><text x="326.5" y="95.8">1173</text><text x="344.7" y="112.8">1186</text><text x="345.4" y="113.0">1166</text><text x="352.3" y="122.1" font-weight="normal">1165</text><text x="349.9" y="127.4">1168</text><text x="350.5" y="127.5">1169</text><text x="425.9" y="113.5">1178</text><text x="426.3" y="113.6">1176</text><text x="420.3" y="127.7">1188</text><text x="420.8" y="127.9">1189</text><text x="464.4" y="119.6">1548</text><text x="464.8" y="119.7">1540</text><text x="485.1" y="119.4">1538</text><text x="485.5" y="119.6">1536</text><text x="490.5" y="123.0">1539</text><text x="505.9" y="119.6">1528</text><text x="506.3" y="119.7">1520</text><text x="526.8" y="119.6">1518</text><text x="527.2" y="119.7">1510</text><text x="698.3" y="95.7">1560</text><text x="657.4" y="133.9">1558</text><text x="657.8" y="134.1">1556</text><text x="657.4" y="144.9">1538</text><text x="657.8" y="145.1">1558</text><text x="530.8" y="152.8">1218</text><text x="539.8" y="153.0">1218</text><text x="535.1" y="153.0">1210</text><text x="501.1" y="150.1">1198</text><text x="506.0" y="153.5">1203</text><text x="505.4" y="158.6">1208</text><text x="489.2" y="156.4" font-weight="normal">1198</text><text x="354.4" y="153.1">1156</text><text x="354.8" y="153.3">1156</text><text x="353.1" y="159.7">1157</text><text x="353.8" y="159.9">7511</text><text x="358.1" y="160.1">1156</text><text x="370.8" y="153.1">1148</text><text x="371.2" y="153.3">1148</text><text x="369.5" y="159.7">1152</text><text x="370.1" y="159.9">2511</text><text x="374.4" y="160.1">1148</text><text x="387.1" y="153.1">1128</text><text x="387.5" y="153.3">1128</text><text x="385.8" y="159.7">1156</text><text x="386.5" y="159.9">6511</text><text x="390.8" y="160.1">1128</text><text x="400.0" y="160.6">1108</text><text x="406.5" y="161.1">1138</text><text x="420.6" y="151.8">1098</text><text x="425.8" y="150.8">1093</text><text x="421.1" y="158.1">1088</text><text x="421.5" y="158.4">1096</text><text x="437.6" y="153.5">1088</text><text x="438.7" y="159.2">1148</text><text x="434.4" y="158.6">1186</text><text x="459.8" y="152.8">1078</text><text x="460.2" y="153.0">1070</text><text x="456.6" y="158.2">1078</text><text x="460.9" y="158.7">1068</text><text x="468.8" y="160.4">1068</text><text x="473.1" y="156.9" font-weight="normal">1048</text><text x="481.7" y="157.0" font-weight="normal">1198</text><text x="324.1" y="291.6">0</text><text x="324.5" y="291.1">2</text><text x="338.9" y="276.2">8</text><text x="344.3" y="276.2">18</text><text x="344.9" y="276.4">13</text><text x="350.8" y="257.5">18</text><text x="351.2" y="257.7">16</text><text x="360.0" y="243.5">28</text><text x="360.4" y="243.6">23</text><text x="420.9" y="257.4">28</text><text x="421.3" y="257.5">26</text><text x="426.7" y="275.5">28</text><text x="427.1" y="275.7">25</text><text x="461.3" y="267.0">38</text><text x="461.7" y="267.2">33</text><text x="482.8" y="267.0">48</text><text x="483.2" y="267.2">46</text><text x="503.2" y="267.0">58</text><text x="503.7" y="267.2">50</text><text x="524.3" y="267.0">58</text><text x="524.7" y="267.2">56</text><text x="699.4" y="291.6">1561</text><text x="703.2" y="292.8" font-size="4.9">1563</text><text x="701.1" y="292.3">1562</text><text x="675.9" y="246.7">520</text><text x="676.3" y="246.9">528</text><text x="553.5" y="112.9">1508</text><text x="554.0" y="113.1">1500</text><text x="563.9" y="112.9">1498</text><text x="564.3" y="113.1">1490</text><text x="574.3" y="112.9">1488</text><text x="574.7" y="113.1">1480</text><text x="584.6" y="112.9">1478</text><text x="585.1" y="113.1">1470</text><text x="595.0" y="112.9">1468</text><text x="595.4" y="113.1">1460</text><text x="605.4" y="112.9">1458</text><text x="605.8" y="113.1">1450</text><text x="615.7" y="112.9">1448</text><text x="616.2" y="113.1">1440</text><text x="626.1" y="112.9">1438</text><text x="626.5" y="113.1">1430</text><text x="553.5" y="120.9">1518</text><text x="554.1" y="121.1">1514</text><text x="552.9" y="124.5">1220</text><text x="556.4" y="124.5">1221</text><text x="559.8" y="124.5">1222</text><text x="554.2" y="126.0">1330</text><text x="557.6" y="126.0">1331</text><text x="561.1" y="126.0">1332</text><text x="552.9" y="129.7">1290</text><text x="558.1" y="129.7">1291</text><text x="554.2" y="132.8">1230</text><text x="557.6" y="132.8">1231</text><text x="561.1" y="132.8">1232</text><text x="552.9" y="133.1">1250</text><text x="558.1" y="133.1">1251</text><text x="563.9" y="120.9">1508</text><text x="564.5" y="121.1">1504</text><text x="563.3" y="124.5">1227</text><text x="566.7" y="124.5">1228</text><text x="570.2" y="124.5">1229</text><text x="564.6" y="126.0">1337</text><text x="568.0" y="126.0">1338</text><text x="571.5" y="126.0">1339</text><text x="563.3" y="129.7">1297</text><text x="568.5" y="129.7">1298</text><text x="564.6" y="132.8">1237</text><text x="568.0" y="132.8">1238</text><text x="571.5" y="132.8">1239</text><text x="563.3" y="133.1">1257</text><text x="568.5" y="133.1">1258</text><text x="574.3" y="120.9">1498</text><text x="574.8" y="121.1">1494</text><text x="573.6" y="124.5">1234</text><text x="577.1" y="124.5">1235</text><text x="580.5" y="124.5">1236</text><text x="574.9" y="126.0">1344</text><text x="578.4" y="126.0">1345</text><text x="581.8" y="126.0">1346</text><text x="573.6" y="129.7">1304</text><text x="578.8" y="129.7">1305</text><text x="574.9" y="132.8">1244</text><text x="578.4" y="132.8">1245</text><text x="581.8" y="132.8">1246</text><text x="573.6" y="133.1">1264</text><text x="578.8" y="133.1">1265</text><text x="584.6" y="120.9">1488</text><text x="585.2" y="121.1">1484</text><text x="584.0" y="124.5">1241</text><text x="587.5" y="124.5">1242</text><text x="590.9" y="124.5">1243</text><text x="585.3" y="126.0">1351</text><text x="588.7" y="126.0">1352</text><text x="592.2" y="126.0">1353</text><text x="584.0" y="129.7">1311</text><text x="589.2" y="129.7">1312</text><text x="585.3" y="132.8">1251</text><text x="588.7" y="132.8">1252</text><text x="592.2" y="132.8">1253</text><text x="584.0" y="133.1">1271</text><text x="589.2" y="133.1">1272</text><text x="595.0" y="120.9">1478</text><text x="595.5" y="121.1">1474</text><text x="594.4" y="124.5">1248</text><text x="597.8" y="124.5">1249</text><text x="601.3" y="124.5">1250</text><text x="595.7" y="126.0">1358</text><text x="599.1" y="126.0">1359</text><text x="602.6" y="126.0">1360</text><text x="594.4" y="129.7">1318</text><text x="599.5" y="129.7">1319</text><text x="595.7" y="132.8">1258</text><text x="599.1" y="132.8">1259</text><text x="602.6" y="132.8">1260</text><text x="594.4" y="133.1">1278</text><text x="599.5" y="133.1">1279</text><text x="605.4" y="120.9">1468</text><text x="605.9" y="121.1">1464</text><text x="604.7" y="124.5">1255</text><text x="608.2" y="124.5">1256</text><text x="611.6" y="124.5">1257</text><text x="606.0" y="126.0">1365</text><text x="609.5" y="126.0">1366</text><text x="612.9" y="126.0">1367</text><text x="604.7" y="129.7">1325</text><text x="609.9" y="129.7">1326</text><text x="606.0" y="132.8">1265</text><text x="609.5" y="132.8">1266</text><text x="612.9" y="132.8">1267</text><text x="604.7" y="133.1">1285</text><text x="609.9" y="133.1">1286</text><text x="615.7" y="120.9">1458</text><text x="616.3" y="121.1">1454</text><text x="615.1" y="124.5">1262</text><text x="618.6" y="124.5">1263</text><text x="622.0" y="124.5">1264</text><text x="616.4" y="126.0">1372</text><text x="619.8" y="126.0">1373</text><text x="623.3" y="126.0">1374</text><text x="615.1" y="129.7">1332</text><text x="620.3" y="129.7">1333</text><text x="616.4" y="132.8">1272</text><text x="619.8" y="132.8">1273</text><text x="623.3" y="132.8">1274</text><text x="615.1" y="133.1">1292</text><text x="620.3" y="133.1">1293</text><text x="626.1" y="120.9">1448</text><text x="626.6" y="121.1">1444</text><text x="625.5" y="124.5">1269</text><text x="628.9" y="124.5">1270</text><text x="632.4" y="124.5">1271</text><text x="626.8" y="126.0">1379</text><text x="630.2" y="126.0">1380</text><text x="633.7" y="126.0">1381</text><text x="625.5" y="129.7">1339</text><text x="630.6" y="129.7">1340</text><text x="626.8" y="132.8">1279</text><text x="630.2" y="132.8">1280</text><text x="633.7" y="132.8">1281</text><text x="625.5" y="133.1">1299</text><text x="630.6" y="133.1">1300</text><text x="638.7" y="128.1" font-size="4.7">866</text><text x="640.9" y="129.7" font-size="4.7">88</text><text x="528.6" y="172.8" font-size="4.7">708</text><text x="533.5" y="172.9" font-size="4.7">703</text><text x="539.0" y="172.8" font-size="4.7">698</text><text x="544.0" y="172.9" font-size="4.7">693</text><text x="549.5" y="172.8" font-size="4.7">688</text><text x="554.4" y="172.9" font-size="4.7">683</text><text x="559.9" y="172.8" font-size="4.7">678</text><text x="564.8" y="172.9" font-size="4.7">673</text><text x="570.3" y="172.8" font-size="4.7">668</text><text x="575.3" y="172.9" font-size="4.7">663</text><text x="580.8" y="172.8" font-size="4.7">658</text><text x="585.7" y="172.9" font-size="4.7">653</text><text x="591.2" y="172.8" font-size="4.7">648</text><text x="596.1" y="172.9" font-size="4.7">643</text><text x="601.6" y="172.8" font-size="4.7">638</text><text x="606.6" y="172.9" font-size="4.7">633</text><text x="612.0" y="172.8" font-size="4.7">628</text><text x="617.0" y="172.9" font-size="4.7">623</text><text x="622.5" y="172.8" font-size="4.7">618</text><text x="627.4" y="172.9" font-size="4.7">613</text><text x="632.9" y="172.8" font-size="4.7">608</text><text x="637.8" y="172.9" font-size="4.7">603</text><text x="643.3" y="172.8" font-size="4.7">598</text><text x="648.3" y="172.9" font-size="4.7">593</text><text x="534.4" y="169.4" font-weight="normal">718</text><text x="530.1" y="177.2" font-weight="normal">722</text><text x="535.5" y="178.4" font-weight="normal">725</text><text x="528.8" y="223.3" font-size="4.7">818</text><text x="533.8" y="223.4" font-size="4.7">813</text><text x="539.2" y="223.3" font-size="4.7">828</text><text x="544.2" y="223.4" font-size="4.7">823</text><text x="549.7" y="223.3" font-size="4.7">838</text><text x="554.6" y="223.4" font-size="4.7">833</text><text x="560.1" y="223.3" font-size="4.7">848</text><text x="565.1" y="223.4" font-size="4.7">843</text><text x="570.5" y="223.3" font-size="4.7">858</text><text x="575.5" y="223.4" font-size="4.7">853</text><text x="581.0" y="223.3" font-size="4.7">868</text><text x="585.9" y="223.4" font-size="4.7">863</text><text x="591.4" y="223.3" font-size="4.7">878</text><text x="596.3" y="223.4" font-size="4.7">873</text><text x="601.8" y="223.3" font-size="4.7">888</text><text x="606.8" y="223.4" font-size="4.7">883</text><text x="612.3" y="223.3" font-size="4.7">898</text><text x="617.2" y="223.4" font-size="4.7">893</text><text x="622.7" y="223.3" font-size="4.7">908</text><text x="627.6" y="223.4" font-size="4.7">903</text><text x="633.1" y="223.3" font-size="4.7">918</text><text x="638.1" y="223.4" font-size="4.7">913</text><text x="643.5" y="223.3" font-size="4.7">928</text><text x="648.5" y="223.4" font-size="4.7">923</text><text x="524.7" y="229.6" font-weight="normal">818</text><text x="523.2" y="230.6" font-weight="normal">817</text><text x="568.2" y="214.8">938</text><text x="572.0" y="215.0">930</text><text x="576.3" y="215.2">936</text><text x="569.9" y="217.5" font-weight="normal">942</text><text x="578.5" y="217.7" font-weight="normal">944</text><text x="584.9" y="219.1" font-weight="normal">946</text><text x="548.0" y="255.2" font-size="4.5">70</text><text x="553.1" y="255.2" font-size="4.5">71</text><text x="549.4" y="257.5">220</text><text x="552.8" y="257.5">221</text><text x="556.2" y="257.5">222</text><text x="548.0" y="259.1">330</text><text x="553.1" y="259.1">331</text><text x="549.4" y="260.3">270</text><text x="552.8" y="260.3">271</text><text x="556.2" y="260.3">272</text><text x="554.4" y="265.5">418</text><text x="554.8" y="265.7">410</text><text x="551.6" y="273.8">428</text><text x="552.0" y="274.0">420</text><text x="558.3" y="255.2" font-size="4.5">77</text><text x="563.4" y="255.2" font-size="4.5">78</text><text x="559.7" y="257.5">227</text><text x="563.1" y="257.5">228</text><text x="566.6" y="257.5">229</text><text x="558.3" y="259.1">337</text><text x="563.4" y="259.1">338</text><text x="559.7" y="260.3">277</text><text x="563.1" y="260.3">278</text><text x="566.6" y="260.3">279</text><text x="564.7" y="265.5">428</text><text x="565.2" y="265.7">420</text><text x="561.9" y="273.8">418</text><text x="562.4" y="274.0">410</text><text x="568.6" y="255.2" font-size="4.5">84</text><text x="573.8" y="255.2" font-size="4.5">85</text><text x="570.0" y="257.5">234</text><text x="573.4" y="257.5">235</text><text x="576.9" y="257.5">236</text><text x="568.6" y="259.1">344</text><text x="573.8" y="259.1">345</text><text x="570.0" y="260.3">284</text><text x="573.4" y="260.3">285</text><text x="576.9" y="260.3">286</text><text x="575.1" y="265.5">438</text><text x="575.5" y="265.7">430</text><text x="572.3" y="273.8">408</text><text x="572.7" y="274.0">400</text><text x="578.9" y="255.2" font-size="4.5">91</text><text x="584.1" y="255.2" font-size="4.5">92</text><text x="580.3" y="257.5">241</text><text x="583.8" y="257.5">242</text><text x="587.2" y="257.5">243</text><text x="578.9" y="259.1">351</text><text x="584.1" y="259.1">352</text><text x="580.3" y="260.3">291</text><text x="583.8" y="260.3">292</text><text x="587.2" y="260.3">293</text><text x="585.4" y="265.5">448</text><text x="585.8" y="265.7">440</text><text x="582.6" y="273.8">398</text><text x="583.0" y="274.0">390</text><text x="589.2" y="255.2" font-size="4.5">98</text><text x="594.4" y="255.2" font-size="4.5">99</text><text x="590.6" y="257.5">248</text><text x="594.1" y="257.5">249</text><text x="597.5" y="257.5">250</text><text x="589.2" y="259.1">358</text><text x="594.4" y="259.1">359</text><text x="590.6" y="260.3">298</text><text x="594.1" y="260.3">299</text><text x="597.5" y="260.3">300</text><text x="595.7" y="265.5">458</text><text x="596.1" y="265.7">450</text><text x="592.9" y="273.8">398</text><text x="593.3" y="274.0">390</text><text x="599.6" y="255.2" font-size="4.5">105</text><text x="604.7" y="255.2" font-size="4.5">106</text><text x="601.0" y="257.5">255</text><text x="604.4" y="257.5">256</text><text x="607.8" y="257.5">257</text><text x="599.6" y="259.1">365</text><text x="604.7" y="259.1">366</text><text x="601.0" y="260.3">305</text><text x="604.4" y="260.3">306</text><text x="607.8" y="260.3">307</text><text x="606.0" y="265.5">468</text><text x="606.5" y="265.7">460</text><text x="603.2" y="273.8">388</text><text x="603.7" y="274.0">380</text><text x="609.9" y="255.2" font-size="4.5">112</text><text x="615.1" y="255.2" font-size="4.5">113</text><text x="611.3" y="257.5">262</text><text x="614.7" y="257.5">263</text><text x="618.2" y="257.5">264</text><text x="609.9" y="259.1">372</text><text x="615.1" y="259.1">373</text><text x="611.3" y="260.3">312</text><text x="614.7" y="260.3">313</text><text x="618.2" y="260.3">314</text><text x="616.3" y="265.5">478</text><text x="616.8" y="265.7">470</text><text x="613.5" y="273.8">378</text><text x="614.0" y="274.0">370</text><text x="620.2" y="255.2" font-size="4.5">119</text><text x="625.4" y="255.2" font-size="4.5">120</text><text x="621.6" y="257.5">269</text><text x="625.1" y="257.5">270</text><text x="628.5" y="257.5">271</text><text x="620.2" y="259.1">379</text><text x="625.4" y="259.1">380</text><text x="621.6" y="260.3">319</text><text x="625.1" y="260.3">320</text><text x="628.5" y="260.3">321</text><text x="626.7" y="265.5">488</text><text x="627.1" y="265.7">480</text><text x="623.9" y="273.8">368</text><text x="624.3" y="274.0">360</text><text x="630.5" y="255.2" font-size="4.5">126</text><text x="635.7" y="255.2" font-size="4.5">127</text><text x="631.9" y="257.5">276</text><text x="635.4" y="257.5">277</text><text x="638.8" y="257.5">278</text><text x="630.5" y="259.1">386</text><text x="635.7" y="259.1">387</text><text x="631.9" y="260.3">326</text><text x="635.4" y="260.3">327</text><text x="638.8" y="260.3">328</text><text x="637.0" y="265.5">498</text><text x="637.4" y="265.7">490</text><text x="634.2" y="273.8">358</text><text x="634.6" y="274.0">350</text><text x="640.9" y="255.2" font-size="4.5">133</text><text x="646.0" y="255.2" font-size="4.5">134</text><text x="642.3" y="257.5">283</text><text x="645.7" y="257.5">284</text><text x="649.1" y="257.5">285</text><text x="640.9" y="259.1">393</text><text x="646.0" y="259.1">394</text><text x="642.3" y="260.3">333</text><text x="645.7" y="260.3">334</text><text x="649.1" y="260.3">335</text><text x="647.3" y="265.5">508</text><text x="647.7" y="265.7">500</text><text x="644.5" y="273.8">348</text><text x="644.9" y="274.0">340</text><text x="651.2" y="255.2" font-size="4.5">140</text><text x="656.3" y="255.2" font-size="4.5">141</text><text x="652.6" y="257.5">290</text><text x="656.0" y="257.5">291</text><text x="659.5" y="257.5">292</text><text x="651.2" y="259.1">400</text><text x="656.3" y="259.1">401</text><text x="652.6" y="260.3">340</text><text x="656.0" y="260.3">341</text><text x="659.5" y="260.3">342</text><text x="657.6" y="265.5">518</text><text x="658.1" y="265.7">510</text><text x="654.8" y="273.8">338</text><text x="655.3" y="274.0">330</text><text x="661.5" y="255.2" font-size="4.5">147</text><text x="666.7" y="255.2" font-size="4.5">148</text><text x="662.9" y="257.5">297</text><text x="666.3" y="257.5">298</text><text x="669.8" y="257.5">299</text><text x="661.5" y="259.1">407</text><text x="666.7" y="259.1">408</text><text x="662.9" y="260.3">347</text><text x="666.3" y="260.3">348</text><text x="669.8" y="260.3">349</text><text x="668.0" y="265.5">528</text><text x="668.4" y="265.7">520</text><text x="665.2" y="273.8">328</text><text x="665.6" y="274.0">320</text><text x="551.0" y="265.8">58</text><text x="551.4" y="266.0">50</text><text x="468.3" y="177.5">1028</text><text x="468.8" y="177.7">8201</text><text x="469.8" y="178.1">1031</text><text x="470.4" y="180.3">1033</text><text x="473.7" y="180.8" font-weight="normal">1035</text><text x="468.3" y="186.4">1018</text><text x="468.8" y="186.7">8101</text><text x="469.8" y="187.1">1021</text><text x="470.4" y="189.3">1023</text><text x="473.7" y="189.8" font-weight="normal">1025</text><text x="468.3" y="195.0">1008</text><text x="468.8" y="195.3">8001</text><text x="469.8" y="195.7">1011</text><text x="470.4" y="197.9">1013</text><text x="473.7" y="198.4" font-weight="normal">1015</text><text x="494.9" y="177.5">998</text><text x="495.5" y="177.7">899</text><text x="496.5" y="178.1">1001</text><text x="497.1" y="180.3">1003</text><text x="500.3" y="180.8" font-weight="normal">1005</text><text x="494.9" y="186.4">988</text><text x="495.5" y="186.7">889</text><text x="496.5" y="187.1">991</text><text x="497.1" y="189.3">993</text><text x="500.3" y="189.8" font-weight="normal">995</text><text x="517.1" y="177.5">738</text><text x="517.6" y="177.7">837</text><text x="518.6" y="178.1">741</text><text x="519.2" y="180.3">743</text><text x="522.5" y="180.8" font-weight="normal">745</text><text x="517.1" y="186.4">748</text><text x="517.6" y="186.7">847</text><text x="518.6" y="187.1">751</text><text x="519.2" y="189.3">753</text><text x="522.5" y="189.8" font-weight="normal">755</text><text x="468.8" y="211.1">1038</text><text x="469.4" y="211.4">8301</text><text x="470.3" y="211.8">1041</text><text x="471.0" y="214.0">1043</text><text x="474.2" y="214.5" font-weight="normal">1045</text><text x="468.8" y="219.7">1058</text><text x="469.4" y="219.9">8501</text><text x="470.3" y="220.3">1061</text><text x="471.0" y="222.5">1063</text><text x="474.2" y="223.1" font-weight="normal">1065</text><text x="494.9" y="204.2">968</text><text x="495.5" y="204.4">869</text><text x="496.5" y="204.8">971</text><text x="497.1" y="207.0">973</text><text x="500.3" y="207.5" font-weight="normal">975</text><text x="517.1" y="203.3">778</text><text x="517.6" y="203.6">877</text><text x="518.6" y="204.0">781</text><text x="519.2" y="206.2">783</text><text x="522.5" y="206.7" font-weight="normal">785</text><text x="494.9" y="211.8">978</text><text x="495.5" y="212.0">879</text><text x="496.5" y="212.5">981</text><text x="497.1" y="214.7">983</text><text x="500.3" y="215.2" font-weight="normal">985</text><text x="494.9" y="219.8">928</text><text x="495.5" y="220.1">829</text><text x="496.5" y="220.5">931</text><text x="497.1" y="222.7">933</text><text x="500.3" y="223.2" font-weight="normal">935</text><text x="517.1" y="211.8">798</text><text x="517.6" y="212.0">897</text><text x="518.6" y="212.5">801</text><text x="519.2" y="214.7">803</text><text x="522.5" y="215.2" font-weight="normal">805</text><text x="517.1" y="219.8">808</text><text x="517.6" y="220.1">808</text><text x="518.6" y="220.5">811</text><text x="519.2" y="222.7">813</text><text x="522.5" y="223.2" font-weight="normal">815</text><text x="469.9" y="203.7">1028</text><text x="470.4" y="204.0">8201</text><text x="471.4" y="204.4">1031</text><text x="472.0" y="206.6">1033</text><text x="475.3" y="207.1" font-weight="normal">1035</text><text x="495.9" y="196.2">958</text><text x="496.5" y="196.4">859</text><text x="497.4" y="196.9">961</text><text x="498.1" y="199.1">963</text><text x="501.3" y="199.6" font-weight="normal">965</text><text x="517.7" y="195.3">768</text><text x="518.3" y="195.6">867</text><text x="519.2" y="196.0">771</text><text x="519.9" y="198.2">773</text><text x="523.1" y="198.7" font-weight="normal">775</text><text x="522.6" y="194.3">748</text><text x="524.7" y="197.9">758</text><text x="525.8" y="204.7">788</text><text x="525.4" y="209.2">792</text><text x="524.7" y="214.0" font-weight="normal">798</text><text x="646.2" y="181.3">588</text><text x="646.8" y="181.4">885</text><text x="646.2" y="184.8">618</text><text x="646.8" y="185.0">816</text><text x="646.2" y="189.1">638</text><text x="646.8" y="189.2">836</text><text x="646.2" y="197.7">598</text><text x="646.8" y="197.9">895</text><text x="646.2" y="201.6">608</text><text x="646.8" y="201.8">806</text><text x="646.2" y="205.5">628</text><text x="646.8" y="205.7">826</text><text x="646.2" y="209.9">648</text><text x="646.8" y="210.1">846</text><text x="646.2" y="214.0">658</text><text x="646.8" y="214.2">856</text><text x="646.2" y="217.9">668</text><text x="646.8" y="218.1">866</text><text x="673.1" y="189.1">570</text><text x="673.7" y="189.3" font-weight="normal">570</text><text x="668.8" y="192.6">575</text><text x="669.4" y="192.9" font-weight="normal">575</text><text x="662.4" y="198.7">548</text><text x="662.9" y="199.0" font-weight="normal">548</text><text x="666.7" y="200.9">558</text><text x="667.2" y="201.2" font-weight="normal">558</text><text x="671.0" y="203.0">568</text><text x="671.5" y="203.2" font-weight="normal">568</text><text x="662.4" y="205.2">540</text><text x="662.9" y="205.4" font-weight="normal">540</text><text x="666.7" y="207.2">550</text><text x="667.2" y="207.5" font-weight="normal">550</text><text x="660.2" y="209.2">538</text><text x="660.8" y="209.5" font-weight="normal">538</text><text x="668.8" y="209.7">562</text><text x="669.4" y="210.0" font-weight="normal">562</text><text x="664.5" y="196.2">578</text><text x="665.1" y="196.4" font-weight="normal">578</text><text x="658.1" y="212.3">678</text><text x="658.6" y="212.5" font-weight="normal">678</text><text x="664.5" y="215.3">670</text><text x="665.1" y="215.6" font-weight="normal">670</text><text x="651.6" y="219.1">688</text><text x="652.2" y="219.3" font-weight="normal">688</text><text x="658.1" y="221.3">690</text><text x="658.6" y="221.5" font-weight="normal">690</text></g>
<rect x="281.2" y="68.2" width="390.40000000000003" height="320.40000000000003" fill="none" stroke="#333" stroke-width="0.9"/>
</svg>
<div class="a" style="left:62px;top:417px;width:628px;height:1px;background:#f8f7f5;"></div>
<svg class="a" style="left:64px;top:405px" width="12" height="12"><circle cx="5.8" cy="5.7" r="3" fill="#dedede" stroke="#1e1e1e" stroke-width="1.6"/></svg>
<div class="t" style="left:77.5px;top:405.9px;font-size:8.8px;line-height:11px;transform:scaleX(0.826);transform-origin:0 0;">CNCjob created: Combo_cnc</div>
<div class="a" style="left:456.4px;top:404.4px;width:1px;height:12.6px;background:#dcdcdc;"></div>
<div class="t" style="left:459.7px;top:405.5px;font-size:7.9px;line-height:11px;transform:scaleX(0.875);transform-origin:0 0;">X: 66.9007</div>
<div class="t" style="left:497px;top:405.5px;font-size:7.9px;line-height:11px;transform:scaleX(0.875);transform-origin:0 0;">Y: 4.3157</div>
<div class="t" style="left:531.4px;top:405.5px;font-size:7.9px;line-height:11px;transform:scaleX(1.06);transform-origin:0 0;">[mm]</div>
<div class="a" style="left:558.6px;top:407.6px;width:6.2px;height:6.2px;border-radius:50%;background:#111;"></div>
<div class="a" style="left:561.8px;top:408.8px;width:2.2px;height:2.2px;border-radius:50%;background:#f0f0f0;"></div>
<div class="t" style="left:570.4px;top:405.5px;font-size:7.9px;line-height:11px;transform:scaleX(0.875);transform-origin:0 0;">Idle.</div>
<div class="a" style="left:678.6px;top:404.4px;width:1px;height:12.6px;background:#d4d4d4;"></div>
<svg class="a" style="left:682px;top:410px" width="8" height="8"><g fill="#b4b4b4"><rect x="5" y="1" width="1.2" height="1.2"/><rect x="3" y="3" width="1.2" height="1.2"/><rect x="5" y="3" width="1.2" height="1.2"/><rect x="1" y="5" width="1.2" height="1.2"/><rect x="3" y="5" width="1.2" height="1.2"/><rect x="5" y="5" width="1.2" height="1.2"/></g></svg>
</body></html>
